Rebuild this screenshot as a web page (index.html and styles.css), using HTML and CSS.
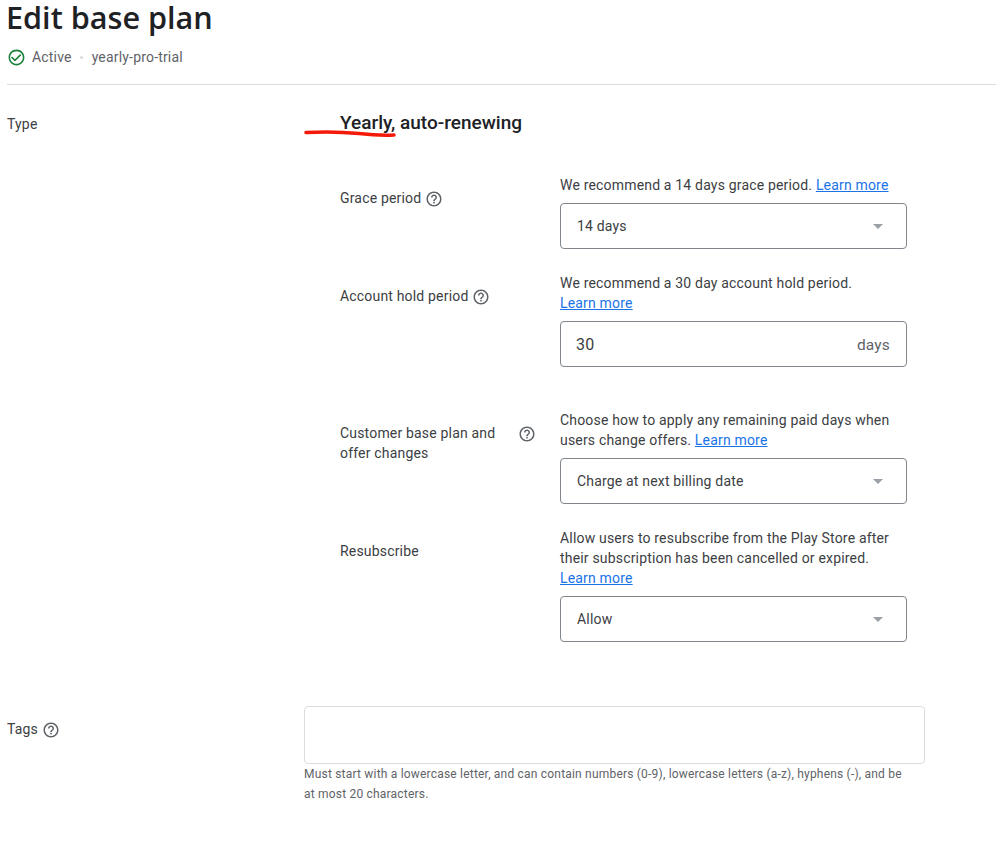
FILE: index.html
```html
<!DOCTYPE html>
<html lang="en">
<head>
<meta charset="utf-8">
<title>Edit base plan</title>
<link rel="stylesheet" href="styles.css">
</head>
<body>
<svg class="defs" width="0" height="0" aria-hidden="true">
  <symbol id="help" viewBox="0 0 24 24"><path d="M11 18h2v-2h-2v2zm1-16C6.48 2 2 6.48 2 12s4.48 10 10 10 10-4.48 10-10S17.52 2 12 2zm0 18c-4.41 0-8-3.59-8-8s3.59-8 8-8 8 3.59 8 8-3.59 8-8 8zm0-14c-2.21 0-4 1.79-4 4h2c0-1.1.9-2 2-2s2 .9 2 2c0 2-3 1.75-3 5h2c0-2.25 3-2.500 3-5 0-2.21-1.79-4-4-4z"/></symbol>
</svg>
<header class="page-head">
  <h1 class="title">Edit base plan</h1>
  <div class="meta">
    <svg class="status-icon" viewBox="0 0 24 24"><path d="M16.59 7.58L10 14.17l-3.59-3.58L5 12l5 5 8-8zM12 2C6.48 2 2 6.48 2 12s4.48 10 10 10 10-4.48 10-10S17.52 2 12 2zm0 18c-4.42 0-8-3.58-8-8s3.58-8 8-8 8 3.58 8 8-3.58 8-8 8z"/></svg>
    <span class="status">Active</span>
    <span class="dot"></span>
    <span>yearly-pro-trial</span>
  </div>
</header>

<section class="type-section">
  <div class="section-label">Type</div>
  <div class="section-body">
    <div class="type-title">Yearly, auto-renewing</div>
    <div class="settings">
      <div class="setting">
        <div class="setting-label"><span>Grace period</span><svg class="help"><use href="#help"/></svg></div>
        <div class="setting-control">
          <p class="hint">We recommend a 14 days grace period. <a href="#">Learn more</a></p>
          <div class="field"><span>14 days</span><span class="caret"></span></div>
        </div>
      </div>
      <div class="setting">
        <div class="setting-label"><span>Account hold period</span><svg class="help"><use href="#help"/></svg></div>
        <div class="setting-control">
          <p class="hint">We recommend a 30 day account hold period.<br><a href="#">Learn more</a></p>
          <div class="field field-input"><span>30</span><span class="suffix">days</span></div>
        </div>
      </div>
      <div class="setting setting-spaced">
        <div class="setting-label"><span class="label-fill">Customer base plan and offer changes</span><svg class="help"><use href="#help"/></svg></div>
        <div class="setting-control">
          <p class="hint">Choose how to apply any remaining paid days when users change offers. <a href="#">Learn more</a></p>
          <div class="field"><span>Charge at next billing date</span><span class="caret"></span></div>
        </div>
      </div>
      <div class="setting">
        <div class="setting-label"><span>Resubscribe</span></div>
        <div class="setting-control">
          <p class="hint">Allow users to resubscribe from the Play Store after their subscription has been cancelled or expired. <a href="#">Learn more</a></p>
          <div class="field"><span>Allow</span><span class="caret"></span></div>
        </div>
      </div>
    </div>
  </div>
</section>

<section class="tags-section">
  <div class="section-label tags-label"><span>Tags</span><svg class="help"><use href="#help"/></svg></div>
  <div class="tags-body">
    <div class="tags-input"></div>
    <p class="tags-help">Must start with a lowercase letter, and can contain numbers (0-9), lowercase letters (a-z), hyphens (-), and be at most 20 characters.</p>
  </div>
</section>

<svg class="scribble" viewBox="0 0 94 9" fill="none"><path d="M2 3.500C20 2.500 40 3 55 4.500C68 6 80 6.500 90 6" stroke="#f5190a" stroke-width="3.500" stroke-linecap="round"/></svg>
</body>
</html>
```
FILE: styles.css
```css
* { box-sizing: border-box; }
html, body { margin: 0; padding: 0; }
body {
  position: relative;
  height: 852px;
  overflow: hidden;
  padding-left: 7px;
  background: #fff;
  color: #3c4043;
  font-family: Roboto, "Liberation Sans", sans-serif;
  font-size: 14px;
  line-height: 20px;
  letter-spacing: .18px;
}
.defs { position: absolute; }
.page-head { border-bottom: 1px solid #dadce0; height: 85px; }
.title {
  margin: 0 0 0 -1px;
  height: 38px;
  color: #202124;
  font-family: "Open Sans", Roboto, sans-serif;
  font-size: 30.600px;
  line-height: 35px;
  font-weight: 600;
  letter-spacing: 0;
}
.meta { display: flex; align-items: center; height: 20px; margin-top: 9px; color: #5f6368; }
.status-icon { width: 19px; height: 19px; fill: #188038; }
.status { margin-left: 6px; }
.dot { width: 3px; height: 3px; margin: 0 9px 0 8px; border-radius: 50%; background: #dadce0; }
.type-section { display: grid; grid-template-columns: 297px 1fr; padding-top: 29px; }
.section-label { color: #3c4043; }
.section-body { padding-left: 36px; }
.type-title { height: 20px; margin-top: -1px; color: #202124; font-size: 19px; line-height: 20px; font-weight: 500; letter-spacing: 0; }
.settings { margin-top: 42px; }
.setting { display: grid; grid-template-columns: 196px 347px; column-gap: 24px; margin-bottom: 24px; width: 567px; }
.setting-spaced { margin-top: 43px; }
.setting-label { display: flex; align-items: flex-start; gap: 4px; padding-top: 13px; }
.label-fill { flex: 1; }
.help { flex: none; width: 18px; height: 18px; margin-top: 2px; fill: #5f6368; }
.hint { margin: 0 0 8px; color: #3c4043; }
.hint a { color: #1a73e8; }
.field {
  display: flex;
  align-items: center;
  justify-content: space-between;
  height: 46px;
  padding: 0 23px 0 16px;
  border: 1px solid #80868b;
  border-radius: 4px;
}
.field-input { padding: 1px 16px 0 15px; font-size: 16px; }
.suffix { color: #5f6368; font-size: 15.500px; }
.caret { width: 0; height: 0; border-left: 5px solid transparent; border-right: 5px solid transparent; border-top: 5px solid #9aa0a6; }
.tags-section { display: grid; grid-template-columns: 297px 621px; margin-top: 40px; }
.tags-label { display: flex; align-items: flex-start; gap: 4px; padding-top: 13px; }
.tags-input { height: 58px; border: 1px solid #dadce0; border-radius: 4px; }
.tags-help { margin: 0; padding-right: 10px; color: #5f6368; font-size: 12px; line-height: 20px; letter-spacing: .2px; }
.scribble { position: absolute; left: 304px; top: 129px; width: 94px; height: 9px; }
```
